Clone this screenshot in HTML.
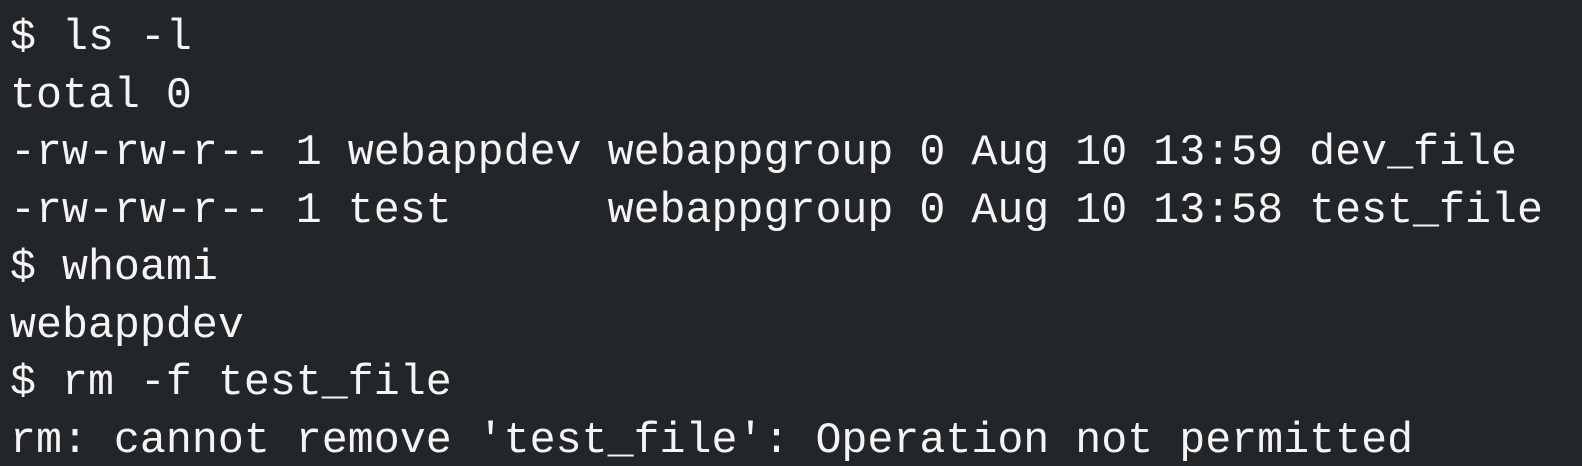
<!DOCTYPE html>
<html><head><style>
html,body{margin:0;padding:0;background:#222628;width:1582px;height:466px;overflow:hidden}
pre{margin:0;padding:10px 0 0 10px;font-family:"Liberation Mono","DejaVu Sans Mono",monospace;font-size:43.3px;line-height:57.5px;color:#f4f4f4}
</style></head><body><pre>$ ls -l
total 0
-rw-rw-r-- 1 webappdev webappgroup 0 Aug 10 13:59 dev_file
-rw-rw-r-- 1 test      webappgroup 0 Aug 10 13:58 test_file
$ whoami
webappdev
$ rm -f test_file
rm: cannot remove 'test_file': Operation not permitted</pre></body></html>
